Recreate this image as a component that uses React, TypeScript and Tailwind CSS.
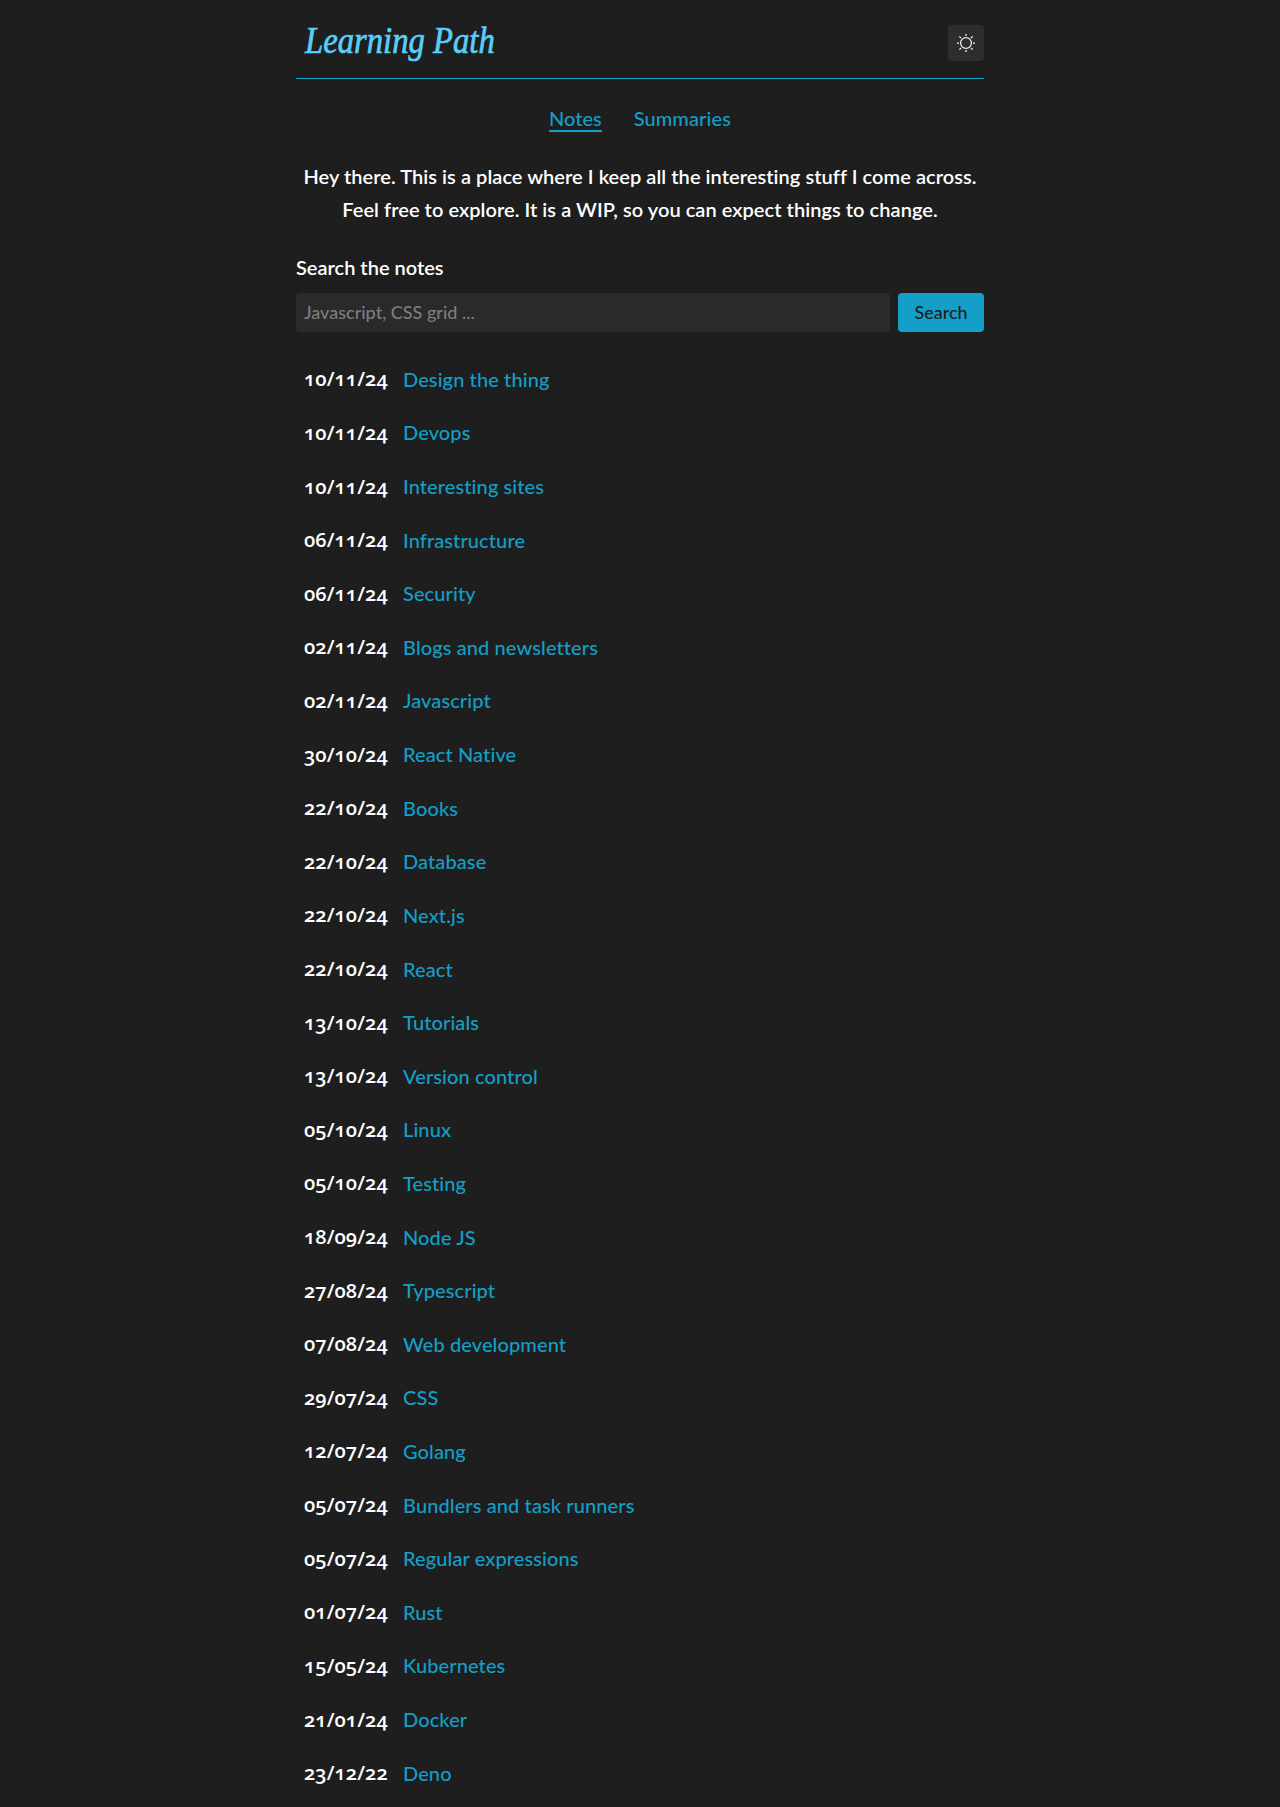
import React from "react";

const notes: [string, string][] = [
  ["10/11/24", "Design the thing"],
  ["10/11/24", "Devops"],
  ["10/11/24", "Interesting sites"],
  ["06/11/24", "Infrastructure"],
  ["06/11/24", "Security"],
  ["02/11/24", "Blogs and newsletters"],
  ["02/11/24", "Javascript"],
  ["30/10/24", "React Native"],
  ["22/10/24", "Books"],
  ["22/10/24", "Database"],
  ["22/10/24", "Next.js"],
  ["22/10/24", "React"],
  ["13/10/24", "Tutorials"],
  ["13/10/24", "Version control"],
  ["05/10/24", "Linux"],
  ["05/10/24", "Testing"],
  ["18/09/24", "Node JS"],
  ["27/08/24", "Typescript"],
  ["07/08/24", "Web development"],
  ["29/07/24", "CSS"],
  ["12/07/24", "Golang"],
  ["05/07/24", "Bundlers and task runners"],
  ["05/07/24", "Regular expressions"],
  ["01/07/24", "Rust"],
  ["15/05/24", "Kubernetes"],
  ["21/01/24", "Docker"],
  ["23/12/22", "Deno"],
];

function SunIcon() {
  return (
    <svg width="18" height="18" viewBox="0 0 18 18" fill="none" stroke="#f5f5f5" strokeWidth="1.25">
      <circle cx="9" cy="9" r="5.4" />
      <path d="M9 0v2M9 16v2M0 9h2M16 9h2M2.4 2.4l1.6 1.6M14 14l1.6 1.6M2.4 15.6l1.6-1.6M14 4l1.6-1.6" />
    </svg>
  );
}

export default function App() {
  return (
    <div className="h-[1807px] overflow-hidden bg-[#1e1e1e] font-['Lato',sans-serif] text-[20px] font-medium text-white [font-variant-ligatures:none]">
      <div className="mx-auto w-[688px]">
        <header className="flex h-[79px] items-start justify-between border-b border-[#139fc7]">
          <a className="mt-[17px] ml-[9px] block origin-left scale-x-[0.86] whitespace-nowrap font-['Liberation_Serif',serif] text-[38px] leading-[46px] font-normal italic text-[#59cefa] [-webkit-text-stroke:0.7px_#59cefa]">
            Learning Path
          </a>
          <button className="mt-[25px] flex h-9 w-9 items-center justify-center rounded bg-[#2d2d2d]">
            <SunIcon />
          </button>
        </header>
        <nav className="mt-6 flex h-8 items-start justify-center gap-8 leading-[31px] text-[#139fc7]">
          <a className="h-[29px] border-b-2 border-[#139fc7]">Notes</a>
          <a className="tracking-[0.1px]">Summaries</a>
        </nav>
        <p className="mt-[25px] text-center leading-[33px] font-semibold tracking-[0.05px] whitespace-nowrap">
          Hey there. This is a place where I keep all the interesting stuff I come across.
          <br />
          Feel free to explore. It is a WIP, so you can expect things to change.
        </p>
        <form className="mt-[25px]">
          <label className="block leading-[33px] font-semibold">Search the notes</label>
          <div className="mt-[9px] flex gap-2">
            <input
              className="h-[39px] min-w-0 flex-1 rounded bg-[#2a2a2a] px-2 pb-[2px] text-[18px] placeholder:text-[#7d7d7d]"
              placeholder="Javascript, CSS grid ..."
            />
            <button type="button" className="h-[39px] w-[86px] rounded bg-[#139fc7] pb-px text-[18px] text-[#1e1e1e]">
              Search
            </button>
          </div>
        </form>
        <ul className="mt-[30px] flex flex-col gap-[20px] pl-2">
          {notes.map(([date, title]) => (
            <li key={title} className="flex h-[33.62px] items-center">
              <span className="w-[99px] pt-px font-['Open_Sans',sans-serif] font-semibold tracking-[0.1px] oldstyle-nums">
                {date}
              </span>
              <a className="tracking-[0.1px] text-[#139fc7]">{title}</a>
            </li>
          ))}
        </ul>
      </div>
    </div>
  );
}
